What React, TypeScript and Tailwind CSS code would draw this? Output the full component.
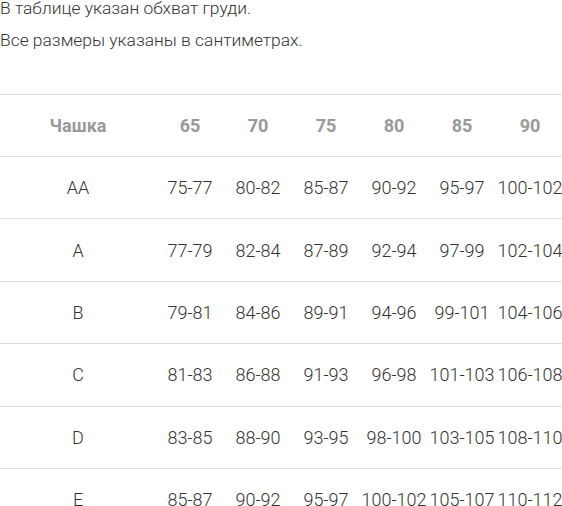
import React from "react";

const head = ["Чашка", "65", "70", "75", "80", "85", "90"];
const rows = [
  ["AA", "75-77", "80-82", "85-87", "90-92", "95-97", "100-102"],
  ["A", "77-79", "82-84", "87-89", "92-94", "97-99", "102-104"],
  ["B", "79-81", "84-86", "89-91", "94-96", "99-101", "104-106"],
  ["C", "81-83", "86-88", "91-93", "96-98", "101-103", "106-108"],
  ["D", "83-85", "88-90", "93-95", "98-100", "103-105", "108-110"],
  ["E", "85-87", "90-92", "95-97", "100-102", "105-107", "110-112"],
];

export default function App() {
  return (
    <div
      className="w-[562px] h-[506px] overflow-hidden bg-white text-[18px] font-light text-[#333]"
      style={{ fontFamily: "Roboto, 'Noto Sans', sans-serif" }}
    >
      <div className="-mt-[8px] leading-[32px] text-[17.4px]">
        <p>В таблице указан обхват груди.</p>
        <p>Все размеры указаны в сантиметрах.</p>
      </div>
      <div className="mt-[38px]">
        <div className="grid grid-cols-[156px_repeat(6,68px)] h-[62px] items-center border-t border-[#ddd] font-bold text-[#999]">
          {head.map((h, i) => (
            <div key={i} className="text-center whitespace-nowrap">
              {h}
            </div>
          ))}
        </div>
        {rows.map((r, ri) => (
          <div
            key={ri}
            className="grid grid-cols-[156px_repeat(6,68px)] h-[62.4px] items-center border-t border-[#ddd]"
          >
            {r.map((c, ci) => (
              <div key={ci} className="flex justify-center whitespace-nowrap">
                {c}
              </div>
            ))}
          </div>
        ))}
      </div>
    </div>
  );
}
